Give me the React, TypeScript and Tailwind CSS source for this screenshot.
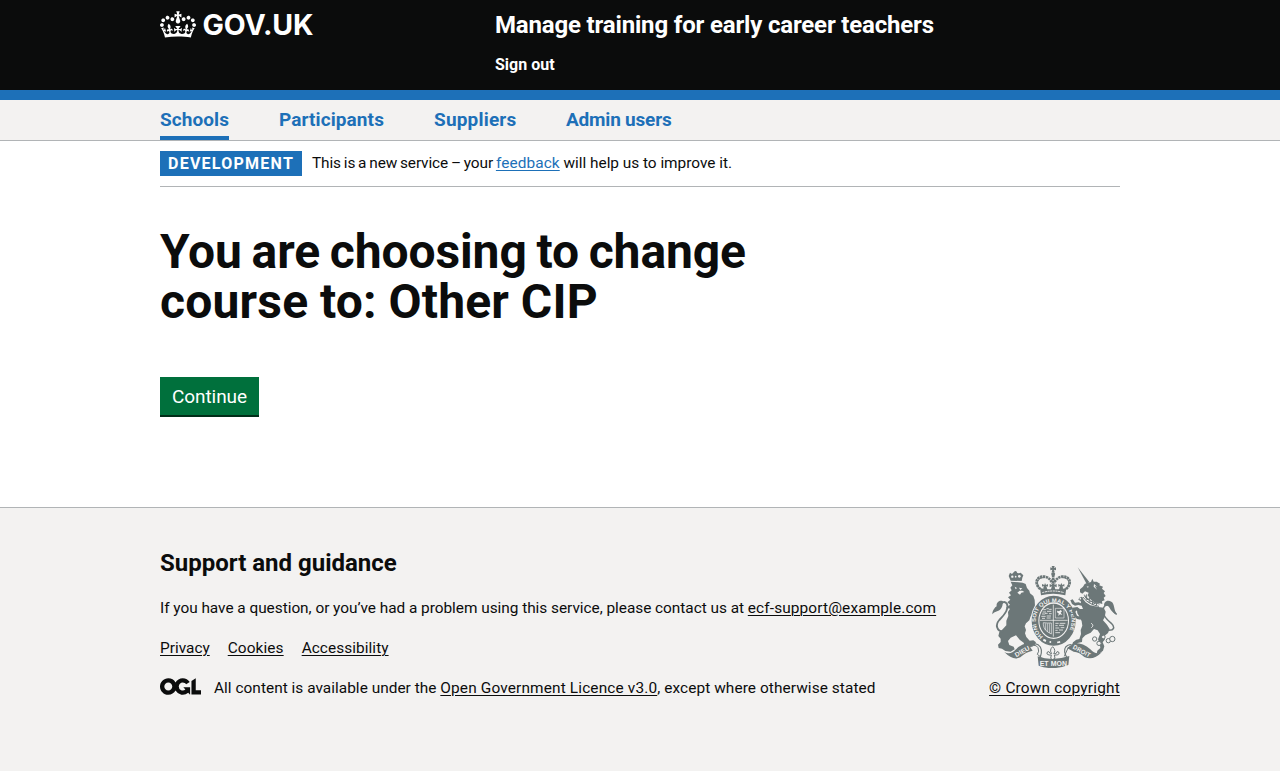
import type { ReactNode } from "react";

function CrownLogo() {
  return (
    <svg aria-hidden="true" className="h-[27px] w-9 fill-white" viewBox="0 0 132 97">
      <path d="M25 30.2c3.5 1.5 7.7-.2 9.1-3.7 1.5-3.6-.2-7.8-3.9-9.2-3.6-1.4-7.6.3-9.1 3.9-1.4 3.5.3 7.5 3.9 9zM9 39.5c3.6 1.5 7.8-.2 9.2-3.7 1.5-3.6-.2-7.8-3.9-9.1-3.6-1.5-7.6.2-9.1 3.8-1.4 3.5.3 7.5 3.8 9zM4.4 57.2c3.5 1.5 7.7-.2 9.1-3.8 1.5-3.6-.2-7.7-3.9-9.1-3.5-1.5-7.6.3-9.1 3.8-1.4 3.5.3 7.6 3.9 9.1zm38.3-21.4c3.5 1.5 7.7-.2 9.1-3.8 1.5-3.6-.2-7.7-3.9-9.1-3.6-1.5-7.6.3-9.1 3.8-1.3 3.6.4 7.7 3.9 9.1zm64.4-5.6c-3.6 1.5-7.8-.2-9.1-3.7-1.5-3.6.2-7.8 3.8-9.2 3.6-1.4 7.7.3 9.2 3.9 1.3 3.5-.4 7.5-3.9 9zm15.9 9.3c-3.6 1.5-7.7-.2-9.1-3.7-1.5-3.6.2-7.8 3.7-9.1 3.6-1.5 7.7.2 9.2 3.8 1.5 3.5-.3 7.5-3.8 9zm4.7 17.7c-3.6 1.5-7.8-.2-9.2-3.8-1.5-3.6.2-7.7 3.9-9.1 3.6-1.5 7.7.3 9.2 3.8 1.3 3.5-.4 7.6-3.9 9.1zM89.3 35.8c-3.6 1.5-7.8-.2-9.2-3.8-1.4-3.6.2-7.7 3.9-9.1 3.6-1.5 7.7.3 9.2 3.8 1.4 3.6-.3 7.7-3.9 9.1zM69.7 17.7l8.9 4.7V9.3l-8.9 2.8c-.2-.3-.5-.6-.9-.9L72.4 0H59.6l3.5 11.2c-.3.3-.6.5-.9.9l-8.8-2.8v13.1l8.8-4.7c.3.3.6.7.9.9l-5 15.4v.1c-.2.8-.4 1.6-.4 2.4 0 4.1 3.1 7.5 7 8.1h.2c.3 0 .7.1 1 .1.4 0 .7 0 1-.1h.2c4-.6 7.1-4.1 7.1-8.1 0-.8-.1-1.7-.4-2.4V34l-5.1-15.4c.4-.2.7-.6 1-.9zM66 92.8c16.9 0 32.8 1.1 47.1 3.2 4-16.9 8.9-26.7 14-33.5l-9.6-3.4c1 4.9 1.1 7.2 0 10.2-1.5-1.4-3-4.3-4.2-8.7L108.6 76c2.8-2 5-3.2 7.5-3.3-4.4 9.4-10 11.9-13.6 11.2-4.3-.8-6.3-4.6-5.6-7.9 1-4.7 5.7-5.9 8-.5 4.3-8.7-3-11.4-7.6-8.8 7.1-7.2 7.9-13.5 2.1-21.1-8 6.1-8.1 12.3-4.5 20.8-4.7-5.4-12.1-2.5-9.5 6.2 3.4-5.2 7.9-2 7.2 3.1-.6 4.3-6.4 7.8-13.5 7.2-10.3-.9-10.9-8-11.2-13.8 2.5-.5 7.1 1.8 11 7.3L80.2 60c-4.1 4.4-8 5.3-12.3 5.4 1.4-4.4 8-11.6 8-11.6H55.5s6.4 7.2 7.9 11.6c-4.2-.1-8-1-12.3-5.4l1.4 16.4c3.9-5.5 8.5-7.7 10.9-7.3-.3 5.8-.9 12.8-11.1 13.8-7.2.6-12.9-2.9-13.5-7.2-.7-5 3.8-8.3 7.1-3.1 2.7-8.7-4.6-11.6-9.4-6.2 3.7-8.5 3.6-14.7-4.6-20.8-5.8 7.6-5 13.9 2.2 21.1-4.7-2.6-11.9.1-7.7 8.8 2.3-5.5 7.1-4.2 8.1.5.7 3.3-1.3 7.1-5.7 7.9-3.5.7-9-1.8-13.5-11.2 2.5.1 4.7 1.3 7.5 3.3l-4.7-15.4c-1.2 4.4-2.7 7.2-4.3 8.7-1.1-3-.9-5.3 0-10.2l-9.5 3.4c5 6.9 9.9 16.7 14 33.5 14.8-2.1 30.8-3.2 47.7-3.2z" />
    </svg>
  );
}

function OglLogo() {
  return (
    <svg aria-hidden="true" className="h-[17px] w-[41px] fill-[#0b0c0c]" viewBox="0 0 483.2 195.7">
      <path d="M421.5 142.8V.1l-50.7 32.3v161.1h112.4v-50.7zm-122.3-9.6A47.12 47.12 0 0 1 221 97.8c0-26 21.1-47.1 47.1-47.1 16.7 0 31.4 8.7 39.7 21.8l42.7-27.2A97.63 97.63 0 0 0 268.1 0c-36.5 0-68.3 20.1-85.1 49.7A98 98 0 0 0 97.8 0C43.9 0 0 43.9 0 97.8s43.9 97.8 97.8 97.8c36.5 0 68.3-20.1 85.1-49.7a97.76 97.76 0 0 0 149.6 25.4l19.4 22.2h3v-87.8h-80l24.3 27.5zM97.8 145c-26 0-47.1-21.1-47.1-47.1s21.1-47.1 47.1-47.1 47.1 21.1 47.1 47.1S123.8 145 97.8 145" />
    </svg>
  );
}

const INK = "#6c7778";
const PAPER = "#f3f2f1";

/* Royal coat of arms: lion, garter and shield, unicorn, motto scroll. */
function RoyalArms() {
  return (
    <svg
      aria-hidden="true"
      className="h-[102px] w-[125px] font-['Liberation_Sans',sans-serif] font-bold"
      viewBox="36 18 375 306"
      fill={INK}
      stroke="none"
    >
      {/* lion */}
      <path d="M90 38 L96 42 L101 37 L105 33 L109 34 L112 39 L117 40 L122 38 L130 46 L127 53 L125 63 L92 62 L86 48 Z" />
      <g fill={PAPER}>
        <circle cx="97" cy="50" r="3.5" />
        <circle cx="118" cy="49" r="4" />
        <circle cx="107" cy="50" r="2.5" />
      </g>
      <path d="M92 65 L128 68 L137 72 L141 84 L148 92 L150 100 L160 108 L164 120 L165 139 L176 143 L180 149 L170 155 L176 162 L168 172 L152 169 L148 181 L138 190 L134 199 L138 210 L135 220 L139 231 L149 242 L160 241 L168 247 L163 256 L149 259 L143 268 L135 262 L131 248 L119 239 L108 226 L92 233 L84 243 L88 255 L101 260 L104 268 L92 275 L76 273 L66 266 L56 264 L54 254 L62 246 L62 236 L55 228 L58 216 L68 208 L79 196 L79 182 L85 168 L84 156 L90 146 L78 143 L90 134 L82 127 L91 119 L84 112 L93 106 L87 98 L95 91 L91 83 L97 76 Z" />
      <path d="M104 80 L111 84 L107 88 Z M117 83 L127 85 L121 90 Z M112 98 L119 92 L127 92 L133 96 L124 98 L120 104Z" fill={PAPER} />
      <path d="M71 216 C48 213 46 193 58 180 C73 165 87 145 81 132 C76 122 65 125 60 136" fill="none" stroke={INK} strokeWidth="5.5" />
      <path d="M69 124 C58 119 48 128 50 139 C45 142 37 151 37 163 C45 153 51 156 60 149 C68 143 68 132 69 124Z" />

      {/* garter */}
      <ellipse cx="221" cy="182" rx="69" ry="78" fill={PAPER} />
      <ellipse cx="221" cy="182" rx="56" ry="65" fill="none" stroke={INK} strokeWidth="20" />
      <path id="garter" d="M189 230 C152 200 162 127 221 127 C280 127 290 200 253 230" fill="none" />
      <text fontSize="16.5" fill={PAPER} textLength="256" lengthAdjust="spacingAndGlyphs">
        <textPath href="#garter">HONI SOIT QUI MAL Y PENSE</textPath>
      </text>
      <path d="M191 236 l8 4 -2 6 -8 -4Z M231 245 l9 -2 1 5 -9 2Z" fill={PAPER} />
      <circle cx="211" cy="246" r="2.8" fill={PAPER} />

      {/* royal crown */}
      <path d="M215 18 h9 l-2 6 6 -2 v9 l-6 -2 2 7 h-9 l2 -7 -6 2 v-9 l6 2Z" />
      <circle cx="219.5" cy="42" r="6" />
      <path d="M181 87 C160 69 171 47 193 50 C206 52 212 60 217 69 M258 87 C279 69 268 47 246 50 C233 52 227 60 222 69 M219.5 45 V88" fill="none" stroke={INK} strokeWidth="8" strokeDasharray="7 1.6" />
      <path d="M181 87 C165 71 173 52 193 53 M258 87 C274 71 266 52 246 53" fill="none" stroke={INK} strokeWidth="3" />
      <path d="M180 84 L190 86 L191 77 L186 80 V72 L193 75 L195 69 L198 75 L204 72 V80 L199 78 L202 88 L213 88 L216 79 L209 82 V72 L216 75 L219.5 67 L223 75 L230 72 V82 L223 79 L226 88 L237 88 L240 78 L235 80 V72 L241 75 L244 69 L247 75 L253 72 V80 L248 77 L249 86 L259 84 L256 106 Q219 97 183 106 Z" />
      <path d="M187 98 Q219 88 252 98" fill="none" stroke={PAPER} strokeWidth="3" strokeDasharray="6 2" />

      {/* quartered shield */}
      <ellipse cx="221" cy="182" rx="43" ry="51" />
      <path d="M220 134 V230 M179 181 H263" fill="none" stroke={PAPER} strokeWidth="2.2" />
      <path d="M190 149 h7 l3 -3 h5 l3 2 h7 M188 156 h10 m3 -2 h13 M186 162 h8 l4 -2 h5 m4 1 h8 M184 169 h13 m3 -1 h13 M186 175 h9 m5 -1 h12 M226 190 h10 m3 0 h17 M226 197 h7 m4 -1 h15 M226 204 h12 m4 -1 h11 M226 211 h7 m4 -1 h12 M226 218 h14" fill="none" stroke={PAPER} strokeWidth="2.4" />
      <path d="M226 145 H252 V174 H226 Z" fill="none" stroke={PAPER} strokeWidth="1.8" />
      <path d="M232 152 l5 2 5 -4 4 4 -4 4 5 7 -7 -2 -5 5 1 -8 -5 -3Z" fill={PAPER} />
      <path d="M190 188 Q204 190 214 189 V222 Q192 212 190 195 Z M196 190 V211 M202 190 V216 M208 190 V219" fill="none" stroke={PAPER} strokeWidth="2" />

      {/* unicorn */}
      <path d="M293 22 L328 66 L320 72 Z" />
      <path d="M321 69 L333 66 L337 56 L341 65 L350 65 L360 71 L358 76 L369 80 L366 86 L375 94 L371 99 L377 108 L371 113 L374 121 L366 124 L367 132 L357 129 L345 128 L331 118 L323 106 L326 98 L315 94 L307 101 L300 97 L300 88 L309 80 L314 72 Z" />
      <path d="M320 79 l7 1 -4 3Z M342 72 l10 9 -8 -4 7 12 -10 -9Z" fill={PAPER} />
      <path d="M313 104 C322 120 339 129 359 132 M309 111 C320 127 339 136 357 139" fill="none" stroke={INK} strokeWidth="3" />
      <path d="M313 107 l7 10 M320 103 v16 l9 -2 M328 113 l-1 14 11 -4 M339 120 l-2 14 11 -6 M351 127 l-3 12" fill="none" stroke={INK} strokeWidth="3" />
      <path d="M306 113 L317 127 L331 136 L355 141 L371 143 L377 155 L374 172 L369 181 L381 194 L389 207 L384 219 L374 227 L375 238 L368 247 L373 259 L369 272 L360 279 L350 282 L352 272 L361 264 L359 250 L354 238 L360 222 L353 211 L342 207 L332 218 L316 226 L307 235 L306 246 L293 249 L284 257 L276 255 L279 247 L289 239 L298 237 L303 222 L302 210 L307 197 L305 184 L299 171 L292 160 L291 151 L286 155 L291 167 L300 170 L302 179 L291 177 L281 167 L276 154 L277 143 L292 141 L300 147 L309 147 L305 137 L295 135 L285 137 L276 132 L271 121 L278 118 L285 128 L296 127 L303 130 L302 121 Z" />
      <path d="M298 113 l8 -3 3 5 -7 8 -7 -4Z" />
      <circle cx="301" cy="116" r="2.5" fill={PAPER} />
      <path d="M384 211 C404 212 405 201 394 190 C374 174 366 158 370 146 C374 132 391 132 396 145 C399 151 404 159 410 163" fill="none" stroke={INK} strokeWidth="4.5" />
      <path d="M373 139 C369 126 382 117 394 125 C404 131 400 144 410 164 C400 161 393 151 389 144 C384 136 378 133 373 139Z" />
      <path d="M333 190 C340 193 340 199 334 203" fill="none" stroke={PAPER} strokeWidth="3" />
      <g fill={PAPER} stroke={INK} strokeWidth="3">
        <circle cx="344" cy="237" r="6.5" />
        <circle cx="357" cy="250" r="6.5" />
        <circle cx="370" cy="231" r="5.5" />
        <circle cx="385" cy="242" r="6.5" />
        <circle cx="397" cy="237" r="8" />
      </g>

      {/* scroll */}
      <path d="M73 276 Q91 287 108 268 Q127 248 151 248 L158 254 L151 262 L158 272 Q137 276 121 292 Q99 303 73 276Z" />
      <path d="M366 276 Q348 287 331 268 Q310 249 285 249 L261 264 L281 275 Q299 276 313 291 Q339 304 366 276Z" />
      <path d="M152 259 Q168 243 181 261 Q189 276 177 299 M286 261 Q270 247 257 261 Q248 273 263 297" fill="none" stroke={INK} strokeWidth="3.5" />
      <path d="M154 260 Q166 251 174 263 Q179 274 172 283 L184 292 M283 260 Q271 254 264 264 L253 289" fill="none" stroke={INK} strokeWidth="3" />
      <path d="M173 289 Q216 305 268 288 L265 315 Q218 333 176 317 Z" />
      <g fill={PAPER} fontSize="19" textAnchor="middle">
        <text transform="translate(130 280) rotate(-29)" textLength="48" lengthAdjust="spacingAndGlyphs">DIEU</text>
        <text transform="translate(302 279) rotate(29)" textLength="58" lengthAdjust="spacingAndGlyphs">DROIT</text>
        <text transform="translate(220 318)" textLength="82" lengthAdjust="spacingAndGlyphs">ET MON</text>
      </g>
      <path d="M218 260 Q229 271 221 281 H228 Q231 271 236 276 Q240 284 229 285 H223 L225 295 L218 299 L212 295 L214 285 H207 Q197 283 202 276 Q207 271 211 281 H215 Q207 270 218 260Z" fill="none" stroke={INK} strokeWidth="3" />
    </svg>
  );
}

function NavItem({ children, className, current = false }: { children: ReactNode; className: string; current?: boolean }) {
  return (
    <li className={current ? "flex h-10 border-b-4 border-[#1d70b8] pt-[7px]" : "flex h-10 pt-[7px]"}>
      <a href="#" className={`text-[19px] leading-[25px] font-bold whitespace-nowrap text-[#1d70b8] ${className}`}>
        {children}
      </a>
    </li>
  );
}

const link = "underline decoration-1 underline-offset-[1.5px]";

export default function App() {
  return (
    <div className="flex min-h-[771px] flex-col bg-white font-['Roboto',sans-serif] text-base leading-5 text-[#0b0c0c]">
      <header className="h-[100px] border-b-[10px] border-[#1d70b8] bg-[#0b0c0c] text-white">
        <div className="mx-auto flex w-[960px]">
          <a href="#" className="flex w-[335px] gap-[6.5px] pt-[11px]">
            <CrownLogo />
            <span className="font-['Inter',sans-serif] text-[28.5px] leading-7 font-bold tracking-[-0.1px]">GOV.UK</span>
          </a>
          <div className="flex flex-col items-start pt-[10px]">
            <a href="#" className="text-2xl leading-[30px] font-bold tracking-[-0.17px] whitespace-nowrap">
              Manage training for early career teachers
            </a>
            <a href="#" className="mt-[15px] font-bold">Sign out</a>
          </div>
        </div>
      </header>

      <nav className="border-b border-[#b1b4b6] bg-[#f3f2f1]">
        <ul className="mx-auto flex w-[960px] gap-[50px]">
          <NavItem current className="w-[69px] tracking-[0.07px]">Schools</NavItem>
          <NavItem className="w-[105px] tracking-[0.1px]">Participants</NavItem>
          <NavItem className="w-[82px] tracking-[0.19px]">Suppliers</NavItem>
          <NavItem className="w-[106px] tracking-[-0.2px]">Admin users</NavItem>
        </ul>
      </nav>

      <div className="mx-auto w-[960px] grow">
        <div className="flex items-start border-b border-[#b1b4b6] pt-[10px] pb-[10px]">
          <strong className="h-[25px] w-[142px] bg-[#1d70b8] px-2 pt-[3px] font-bold tracking-[1.25px] whitespace-nowrap text-white">
            DEVELOPMENT
          </strong>
          <span className="ml-[10px] pt-[2px] text-[15.4px] whitespace-nowrap">
            <span className="tracking-[-0.12px] [word-spacing:-0.8px]">This is a new service – your </span>
            <a href="#" className={`tracking-[0.1px] text-[#1d70b8] ${link}`}>feedback</a>
            <span className="tracking-[-0.02px]"> will help us to improve it.</span>
          </span>
        </div>

        <main className="pt-10">
          <h1 className="text-5xl leading-[50px] font-bold">
            <span className="block tracking-[-0.1px] [word-spacing:-2.1px]">You are choosing to change</span>
            <span className="block tracking-[0.2px] [word-spacing:-0.5px]">course to: Other CIP</span>
          </h1>
          <button
            type="button"
            className="mt-[50px] block h-10 w-[99px] border-b-2 border-[#002d18] bg-[#00703c] text-[19px] leading-[19px] tracking-[-0.07px] text-white"
          >
            Continue
          </button>
        </main>
      </div>

      <footer className="h-[264px] border-t border-[#b1b4b6] bg-[#f3f2f1] text-[15.4px]">
        <div className="mx-auto flex w-[960px] justify-between">
          <div className="pt-10">
            <h2 className="text-2xl leading-[30px] font-bold">Support and guidance</h2>
            <p className="mt-5 whitespace-nowrap">
              <span className="tracking-[-0.03px]">If you have a question, or you’ve had a problem using this service, please contact us at </span>
              <a href="#" className={`tracking-[0.13px] ${link}`}>ecf-support@example.com</a>
            </p>
            <ul className="mt-5 flex gap-[18px]">
              <li><a href="#" className={link}>Privacy</a></li>
              <li><a href="#" className={`tracking-[0.1px] ${link}`}>Cookies</a></li>
              <li><a href="#" className={`tracking-[0.06px] ${link}`}>Accessibility</a></li>
            </ul>
            <div className="mt-5 flex gap-[13px]">
              <OglLogo />
              <span className="tracking-[0.085px] whitespace-nowrap">
                <span className="tracking-[0.03px]">All content is available under the </span>
                <a href="#" className={`tracking-[0.15px] ${link}`}>Open Government Licence v3.0</a>, except where otherwise stated
              </span>
            </div>
          </div>
          <a href="#" className={`flex w-[131px] flex-col items-center gap-[10px] pt-[58px] tracking-[0.2px] whitespace-nowrap ${link}`}>
            <RoyalArms />
            <span>© Crown copyright</span>
          </a>
        </div>
      </footer>
    </div>
  );
}
